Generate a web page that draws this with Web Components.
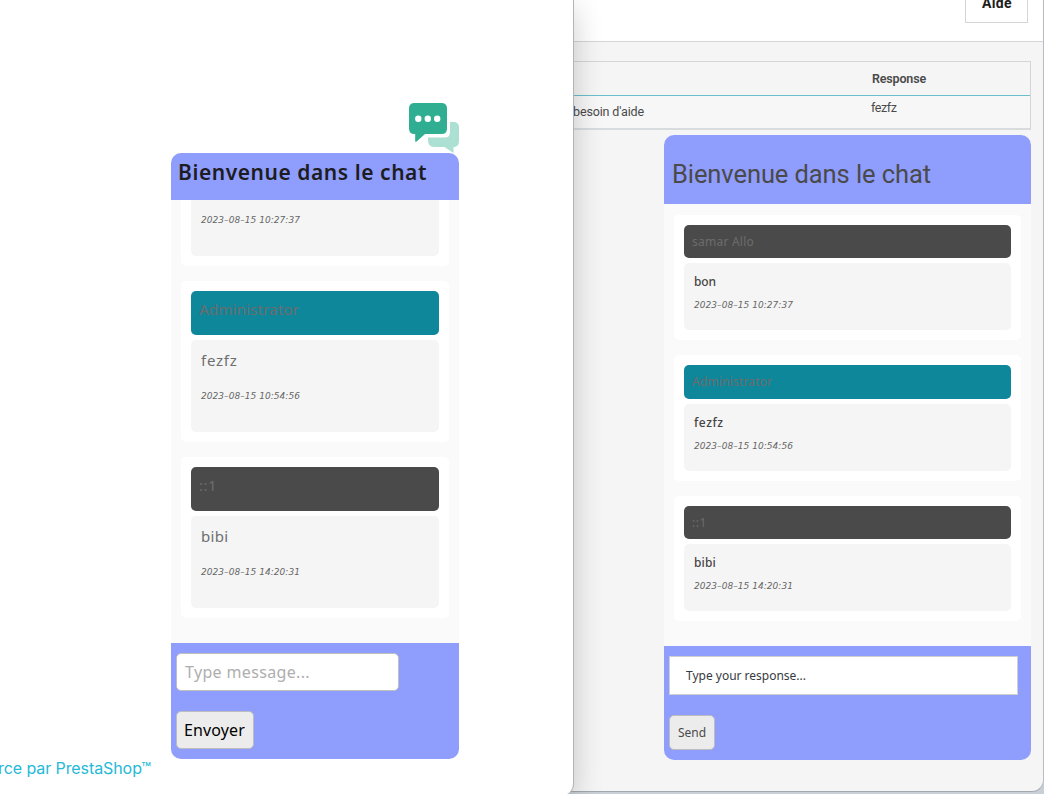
<!DOCTYPE html>
<html lang="fr">
<head>
<meta charset="utf-8">
<title>Chat</title>
<style>
html, body { margin: 0; height: 794px; overflow: hidden; }
body { background: #c9cfd6; font-family: "Noto Sans", sans-serif; }
</style>
</head>
<body>
<desktop-scene></desktop-scene>
<script>
function component(name, html, init) {
  const t = document.createElement('template');
  t.innerHTML = html;
  customElements.define(name, class extends HTMLElement {
    connectedCallback() {
      if (this.shadowRoot) return;
      this.attachShadow({ mode: 'open' }).appendChild(t.content.cloneNode(true));
      if (init) init.call(this, this.shadowRoot);
    }
  });
}

component('desktop-scene', `
<style>
:host { display: grid; grid-template-columns: 573px 471px; height: 794px; overflow: hidden; }
</style>
<shop-window></shop-window>
<admin-window></admin-window>`);

component('shop-window', `
<style>
:host { position: relative; z-index: 1; display: flex; flex-direction: column; box-sizing: border-box; height: 795px; padding-top: 103px;
  background: #fff; border-right: 1px solid #b4b4b4; border-radius: 0 0 11px 0; box-shadow: 0 8px 30px rgba(0,0,0,.2); width: 574px; }
chat-icon { margin-left: 409px; }
chat-panel { margin-left: 171px; width: 288px; height: 606px; --head: 47px; --name: 44px; --bubble: 92px; --foot: 116px; }
.t { color: #1d1d1f; font-weight: 600; font-size: 21px; line-height: 38px; margin-left: -1px; }
footer { width: 151px; display: flex; justify-content: flex-end; overflow: hidden; white-space: nowrap; color: #25b9d7; font: 400 16px/18px Inter, sans-serif; }
.in { box-sizing: border-box; width: 223px; height: 38px; border: 1px solid #bfbfbf; border-radius: 5px; background: #fff; color: #aeaeae; font-size: 16px; line-height: 36px; padding-left: 8px; }
.b { box-sizing: border-box; width: 78px; height: 38px; border: 1px solid #bdbdbd; border-radius: 5px; background: #ececec; color: #000; font-size: 16px; line-height: 36px; padding-left: 7px; }
.f { display: flex; flex-direction: column; gap: 20px; padding: 10px 5px; }
</style>
<chat-icon></chat-icon>
<chat-panel>
  <div slot="head" class="t"><fit-text w="249">Bienvenue dans le chat</fit-text></div>
  <chat-message cut date="2023–08–15 10:27:37"></chat-message>
  <chat-message admin name="Administrator" nw="100" text="fezfz" tw="36.5" date="2023–08–15 10:54:56"></chat-message>
  <chat-message name="::1" nw="18" text="bibi" tw="27.5" date="2023–08–15 14:20:31"></chat-message>
  <div slot="foot" class="f"><div class="in"><fit-text w="125">Type message...</fit-text></div><div class="b"><fit-text w="61">Envoyer</fit-text></div></div>
</chat-panel>
<footer><fit-text w="153">rce par PrestaShop™</fit-text></footer>`);

component('admin-window', `
<style>
:host { display: flex; flex-direction: column; box-sizing: border-box; margin-left: -30px; padding-left: 30px; width: 501px; height: 792px;
  background: #f5f5f5; border-right: 1px solid #b7bcc3; border-bottom: 1px solid #a3a8af; border-radius: 0 0 12px 0; color: #4a4a4a; }
header { display: flex; justify-content: flex-end; flex: none; box-sizing: border-box; height: 42px; margin-left: -30px; padding-right: 15px; background: #fff; border-bottom: 1px solid #d3d5d7; }
.help { box-sizing: border-box; width: 63px; height: 23px; border: 1px solid #d3d5d7; border-top: 0; padding-left: 16px; color: #1d1d1b; font: 700 14px/7px Roboto, sans-serif; }
.table { margin-top: 19px; flex: none; box-sizing: border-box; width: 458px; height: 69px; border: 1px solid #d3d5d7; border-left: 0; border-bottom: 2px solid #d9dcdf; background: #f7f7f7; font: 12.5px Roboto, sans-serif; }
.row { display: grid; grid-template-columns: 298px 1fr; }
.row.h { height: 33px; border-bottom: 1px solid #6bbfcb; font-weight: 600; line-height: 34px; background: #f5f5f5; }
chat-panel { margin: 5px 0 0 91px; width: 367px; height: 625px; --head: 69px; --name: 33.5px; --bubble: 67px; --foot: 114px; }
.t { font: 400 25.5px/78px Roboto, sans-serif; }
.f { display: flex; flex-direction: column; gap: 20px; padding: 10px 5px; font-size: 12px; color: #363a41; }
.in { box-sizing: border-box; width: 349px; height: 39px; border: 1px solid #cfcfcf; background: #fff; line-height: 37px; padding-left: 16px; }
.b { box-sizing: border-box; width: 46px; height: 35px; border: 1px solid #bdbdbd; border-radius: 5px; background: #ececec; line-height: 33px; padding-left: 8px; color: #4a4a4a; }
</style>
<header><div class="help"><fit-text w="30">Aide</fit-text></div></header>
<div class="table">
  <div class="row h"><span></span><span style="padding-left:1px"><fit-text w="54">Response</fit-text></span></div>
  <div class="row"><span style="line-height:32px"><fit-text w="71">besoin d'aide</fit-text></span><span style="line-height:24px"><fit-text w="25.5">fezfz</fit-text></span></div>
</div>
<chat-panel>
  <div slot="head" class="t"><fit-text w="259">Bienvenue dans le chat</fit-text></div>
  <chat-message compact name="samar Allo" nw="62" text="bon" tw="22" date="2023–08–15 10:27:37"></chat-message>
  <chat-message compact admin name="Administrator" nw="80" text="fezfz" tw="29.5" date="2023–08–15 10:54:56"></chat-message>
  <chat-message compact name="::1" nw="15" text="bibi" tw="22" date="2023–08–15 14:20:31"></chat-message>
  <div slot="foot" class="f"><div class="in"><fit-text w="120">Type your response...</fit-text></div><div class="b"><fit-text w="28">Send</fit-text></div></div>
</chat-panel>`);

component('chat-icon', `
<style>:host { display: block; width: 50px; height: 50px; } svg { display: block; }</style>
<svg width="50" height="50" viewBox="0 0 50 50">
<path fill="#abe0d2" d="M41 19H44.5Q50 19 50 24.5V38Q50 44 44.5 44V50L35.5 44H25Q19 44 19 37V34.5H36Q41 34.5 41 29Z"/>
<path fill="#2fae91" d="M5.5 0H32.5Q38 0 38 5.5V25.5Q38 31 32.5 31H16L7.3 38.7Q6.2 39.2 6.2 38V31H5.5Q0 31 0 25.5V5.5Q0 0 5.5 0Z"/>
<g fill="#fff"><circle cx="9.3" cy="15.8" r="3.2"/><circle cx="18.8" cy="15.8" r="3.2"/><circle cx="28.2" cy="15.8" r="3.2"/></g>
</svg>`);

component('chat-panel', `
<style>
:host { display: flex; flex: none; flex-direction: column; border-radius: 10px; overflow: hidden; background: #fafafa; }
.head { flex: none; height: var(--head); box-sizing: border-box; padding-left: 8px; background: #8f9dfd; }
.body { flex: 1; min-height: 0; display: flex; flex-direction: column; justify-content: flex-end; gap: 15px; padding: 0 10px 25px; }
.foot { flex: none; height: var(--foot); background: #8f9dfd; }
</style>
<div class="head"><slot name="head"></slot></div>
<div class="body"><slot></slot></div>
<div class="foot"><slot name="foot"></slot></div>`);

component('chat-message', `
<style>
:host { display: flex; flex: none; flex-direction: column; gap: 5px; padding: 10px; background: #fff; border-radius: 5px; color: #6e6e6e; font-size: 15px; }
.name { box-sizing: border-box; height: var(--name); padding-left: 8px; background: #4a4a4a; border-radius: 5px; line-height: 37px; color: #6c6c6c; }
:host([admin]) .name { background: #0f879b; }
.bubble { box-sizing: border-box; height: var(--bubble); padding-left: 10px; background: #f5f5f5; border-radius: 5px; }
.text { line-height: 41px; height: 41px; }
.date { font: italic 9px/31px "DejaVu Sans", sans-serif; color: #666; }
:host([compact]) { font-size: 12px; color: #444; }
:host([compact]) .name { line-height: 33px; }
:host([compact]) .text { height: 28px; line-height: 37px; font-weight: 500; }
:host([compact]) .date { line-height: 28px; }
:host([cut]) { padding-top: 0; border-top-left-radius: 0; border-top-right-radius: 0; }
:host([cut]) .name, :host([cut]) .text { display: none; }
:host([cut]) .bubble { height: 56px; border-radius: 0 0 5px 5px; }
:host([cut]) .date { line-height: 41px; }
</style>
<div class="name"></div>
<div class="bubble"><div class="text"></div><div class="date"></div></div>`, function (root) {
  const put = (sel, value, width) => {
    if (!value) return;
    const f = document.createElement('fit-text');
    f.setAttribute('w', width);
    f.textContent = value;
    root.querySelector(sel).append(f);
  };
  put('.name', this.getAttribute('name'), this.getAttribute('nw'));
  put('.text', this.getAttribute('text'), this.getAttribute('tw'));
  put('.date', this.getAttribute('date'), 99);
});

/* Inline label whose tracking is adjusted to reach the width in its w attribute. */
component('fit-text', `
<style>:host { display: inline-block; white-space: nowrap; line-height: inherit; }</style><slot></slot>`, function () {
  const gap = this.getAttribute('w') - this.getBoundingClientRect().width;
  this.style.letterSpacing = gap / this.textContent.length + 'px';
});
</script>
</body>
</html>
